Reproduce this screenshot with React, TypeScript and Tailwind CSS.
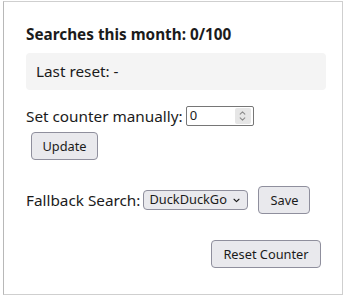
import React from "react";

const font = { fontFamily: '"Noto Sans", "Open Sans", sans-serif' };

const Chevron: React.FC<{ className?: string }> = ({ className = "" }) => (
  <svg viewBox="0 0 10 6" className={className} fill="none" stroke="currentColor" strokeWidth="1.6" strokeLinecap="round" strokeLinejoin="round">
    <path d="M1.5 1.2 5 4.6 8.5 1.2" />
  </svg>
);

const Button: React.FC<{ label: string; className?: string }> = ({ label, className = "" }) => (
  <button
    className={`flex h-[28px] items-center justify-center whitespace-nowrap rounded-[4px] border border-[#8f8f9d] bg-[#e9e9ed] px-0 text-[12.8px] leading-none text-[#1b1b1b] ${className}`}
  >
    {label}
  </button>
);

export default function App() {
  return (
    <div className="h-[298px] w-[345px] overflow-hidden bg-white" style={font}>
      <div className="ml-[3px] mt-[1px] h-[294px] w-[340px] border border-[#cfcfcf] border-l-[#b8b8b8] pl-[22px] pr-[16px] pt-[22px] text-[#1b1b1b]">
        <h1 className="text-[15.3px] font-bold leading-[20px]">Searches this month: 0/100</h1>

        <div className="mt-[9px] flex h-[37px] items-center rounded-[4px] bg-[#f4f4f4] px-[10px] text-[15.3px]">
          Last reset: -
        </div>

        <div className="mt-[16px] flex h-[20px] items-center text-[15.3px]">
          <span>Set counter manually:</span>
          <div className="ml-[3px] flex h-[20px] w-[68px] items-center rounded-[2px] border border-[#767676] bg-white pl-[3px] pr-[2px]">
            <span className="flex-1 text-[13px]">0</span>
            <div className="flex h-[16px] w-[16px] flex-col items-center justify-center rounded-[2px] bg-[#e6e6e6] text-[#8a8a8a]">
              <Chevron className="h-[4px] w-[7px] rotate-180" />
              <Chevron className="mt-[2px] h-[4px] w-[7px]" />
            </div>
          </div>
        </div>

        <Button label="Update" className="ml-[5px] mt-[6px] w-[67px]" />

        <div className="mt-[26px] flex items-center text-[15.3px]">
          <span>Fallback Search:</span>
          <div className="ml-[3px] flex h-[20px] w-[105px] items-center rounded-[4px] border border-[#8f8f9d] bg-[#e9e9ed] pl-[5px] pr-[7px] text-[12.8px]">
            <span className="flex-1">DuckDuckGo</span>
            <Chevron className="h-[5px] w-[7px]" />
          </div>
          <Button label="Save" className="ml-[10px] w-[52px]" />
        </div>

        <div className="mt-[26px] flex justify-end pr-[5px]">
          <Button label="Reset Counter" className="w-[110px]" />
        </div>
      </div>
    </div>
  );
}
